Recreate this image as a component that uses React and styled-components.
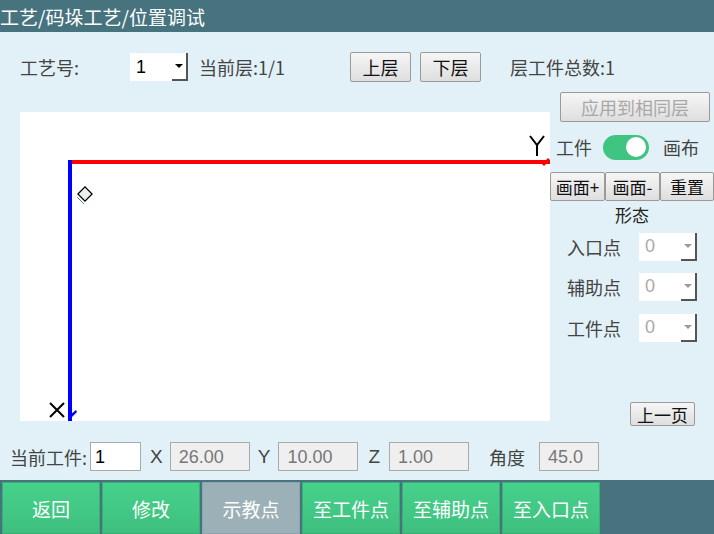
import React, { useState } from "react";
import styled, { createGlobalStyle } from "styled-components";

const GlobalStyle = createGlobalStyle`
  html, body {
    margin: 0;
    padding: 0;
    width: 714px;
    height: 534px;
    overflow: hidden;
    font-family: "Noto Sans CJK SC", "Noto Sans", sans-serif;
  }
  * { box-sizing: border-box; }
`;

const Page = styled.div`
  width: 714px;
  height: 534px;
  display: flex;
  flex-direction: column;
  background: #e2f1f7;
  color: #444;
`;

const TitleBar = styled.div`
  height: 32px;
  flex-shrink: 0;
  background: #47737f;
  color: #fff;
  font-size: 19px;
  line-height: 34px;
  white-space: nowrap;
`;

const TopRow = styled.div`
  height: 50px;
  flex-shrink: 0;
  padding: 20px 0 0 20px;
  display: flex;
  align-items: center;
  font-size: 18px;
`;

const Label = styled.span`
  font-size: 18px;
  color: #444;
  white-space: nowrap;
  margin-left: ${(p) => p.$ml || 0}px;
`;

const Combo = styled.div`
  width: 58px;
  height: 28px;
  flex-shrink: 0;
  background: #fff;
  display: flex;
  align-items: center;
  margin-left: ${(p) => p.$ml || 0}px;
  font-family: "Liberation Sans", sans-serif;
  font-size: 18px;
  color: ${(p) => (p.$muted ? "#aaa" : "#000")};
  padding-left: 6px;
`;

const ComboArrow = styled.span`
  margin-left: auto;
  width: 16px;
  height: 100%;
  border-right: 2px solid #555;
  border-bottom: 2px solid #555;
  display: flex;
  align-items: center;
  justify-content: center;
  &::after {
    content: "";
    border-left: 4px solid transparent;
    border-right: 4px solid transparent;
    border-top: 4px solid ${(p) => (p.$muted ? "#999" : "#000")};
  }
`;

const Button = styled.button`
  flex-shrink: 0;
  height: ${(p) => p.$h || 30}px;
  width: ${(p) => p.$w}px;
  margin-left: ${(p) => p.$ml || 0}px;
  padding: 0;
  border: 1px solid #9a9a9a;
  border-radius: 2px;
  background: linear-gradient(#f6f6f6, #dedede);
  font-family: "Noto Sans CJK SC", sans-serif;
  font-size: ${(p) => p.$fs || 18}px;
  line-height: 1;
  color: ${(p) => (p.disabled ? "#a8a8a8" : "#111")};
  white-space: nowrap;
`;

const Middle = styled.div`
  display: flex;
  height: 350px;
  flex-shrink: 0;
`;

const CanvasCol = styled.div`
  padding: 30px 0 0 20px;
`;

const Canvas = styled.div`
  width: 530px;
  height: 309px;
  background: #fff;
`;

const Side = styled.div`
  width: 164px;
  padding-top: 10px;
  display: flex;
  flex-direction: column;
  & > * { flex-shrink: 0; }
`;

const ToggleRow = styled.div`
  display: flex;
  align-items: center;
  height: 28px;
  margin-top: 11px;
  padding-left: 6px;
`;

const Switch = styled.div`
  width: 46px;
  height: 25px;
  border-radius: 13px;
  background: #3fc482;
  margin-left: 11px;
  margin-right: 14px;
  position: relative;
  &::after {
    content: "";
    position: absolute;
    top: 2.5px;
    left: ${(p) => (p.$on ? 23 : 3)}px;
    width: 20px;
    height: 20px;
    border-radius: 50%;
    background: #fff;
  }
`;

const ViewButtons = styled.div`
  display: flex;
  margin-top: 11px;
`;

const SectionTitle = styled.div`
  text-align: center;
  font-size: 17px;
  color: #222;
  height: 27px;
  line-height: 27px;
`;

const PointRow = styled.div`
  display: flex;
  align-items: center;
  height: 27px;
  margin-top: ${(p) => p.$mt}px;
  padding-left: 17px;
`;

const PageButton = styled(Button)`
  align-self: flex-start;
  margin: 61px 0 0 80px;
  height: 24px;
  width: 65px;
  font-size: 17px;
`;

const FieldRow = styled.div`
  display: flex;
  flex-shrink: 0;
  align-items: center;
  height: 29px;
  margin-top: 10px;
  padding-left: 10px;
`;

const Field = styled.div`
  height: 29px;
  flex-shrink: 0;
  width: ${(p) => p.$w}px;
  margin-left: ${(p) => p.$ml || 0}px;
  border: 1px solid #aaa;
  background: ${(p) => (p.$edit ? "#fff" : "#efefef")};
  color: ${(p) => (p.$edit ? "#000" : "#777")};
  font-family: "Liberation Sans", sans-serif;
  font-size: 18px;
  line-height: 29px;
  padding-left: ${(p) => (p.$edit ? 4 : 8)}px;
`;

const AxisLabel = styled.span`
  font-family: "Liberation Sans", sans-serif;
  font-size: 19px;
  color: #444;
  margin-left: ${(p) => p.$ml}px;
`;

const BottomBar = styled.div`
  margin-top: 9px;
  flex: 1;
  background: #47737f;
  display: flex;
  gap: 2px;
  padding: 2px 0 0 2px;
`;

const NavButton = styled.button`
  width: 98px;
  height: 52px;
  padding: 0;
  border: 1px solid ${(p) => (p.$active ? "#8fa6ae" : "#3bb074")};
  background: ${(p) =>
    p.$active ? "#9cb0b8" : "linear-gradient(#46d28b, #3fbf7f)"};
  color: #fff;
  font-family: "Noto Sans CJK SC", sans-serif;
  font-size: 19px;
`;

function ComboBox({ value, muted, ml }) {
  return (
    <Combo $muted={muted} $ml={ml}>
      {value}
      <ComboArrow $muted={muted} />
    </Combo>
  );
}

function Drawing() {
  return (
    <svg width="530" height="309" viewBox="0 0 530 309">
      <rect x="48" y="48" width="482" height="4" fill="#ff0000" />
      <path d="M522 52 L528 46 L530 48 L524 54 Z" fill="#ff0000" />
      <rect x="48" y="48" width="4" height="261" fill="#0000ff" />
      <path d="M50 303 L56 298 L57 300 L51 306 Z" fill="#0000ff" />
      <path d="M510 24 L517 33 L524 24 M517 33 L517 44" stroke="#000" strokeWidth="2" fill="none" />
      <path d="M30 291 L44 305 M44 291 L30 305" stroke="#000" strokeWidth="2" fill="none" />
      <g transform="translate(65 82) rotate(-45)">
        <rect x="-5" y="-5" width="10" height="10" fill="#eee" stroke="#000" strokeWidth="1.3" />
      </g>
      <path d="M57 85 L63 91" stroke="#e08a2a" strokeWidth="1" />
      <path d="M58 86 L64 92" stroke="#3a8ad8" strokeWidth="1" />
    </svg>
  );
}

export default function App() {
  const [on] = useState(true);
  return (
    <>
      <GlobalStyle />
      <Page>
        <TitleBar>工艺/码垛工艺/位置调试</TitleBar>
        <TopRow>
          <Label>工艺号:</Label>
          <ComboBox value="1" ml={51} />
          <Label $ml={11}>当前层:1/1</Label>
          <Button $w={61} $ml={65}>上层</Button>
          <Button $w={61} $ml={9}>下层</Button>
          <Label $ml={29}>层工件总数:1</Label>
        </TopRow>
        <Middle>
          <CanvasCol>
            <Canvas>
              <Drawing />
            </Canvas>
          </CanvasCol>
          <Side>
            <Button $w={150} $ml={10} disabled>应用到相同层</Button>
            <ToggleRow>
              <Label>工件</Label>
              <Switch $on={on} />
              <Label>画布</Label>
            </ToggleRow>
            <ViewButtons>
              <Button $w={55} $h={29} $fs={17}>画面+</Button>
              <Button $w={55} $h={29} $fs={17}>画面-</Button>
              <Button $w={54} $h={29} $fs={17}>重置</Button>
            </ViewButtons>
            <SectionTitle>形态</SectionTitle>
            <PointRow $mt={5}>
              <Label>入口点</Label>
              <ComboBox value="0" muted ml={18} />
            </PointRow>
            <PointRow $mt={13}>
              <Label>辅助点</Label>
              <ComboBox value="0" muted ml={18} />
            </PointRow>
            <PointRow $mt={14}>
              <Label>工件点</Label>
              <ComboBox value="0" muted ml={18} />
            </PointRow>
            <PageButton>上一页</PageButton>
          </Side>
        </Middle>
        <FieldRow>
          <Label>当前工件:</Label>
          <Field $edit $w={51} $ml={3}>1</Field>
          <AxisLabel $ml={9}>X</AxisLabel>
          <Field $w={80} $ml={7}>26.00</Field>
          <AxisLabel $ml={8}>Y</AxisLabel>
          <Field $w={80} $ml={8}>10.00</Field>
          <AxisLabel $ml={10}>Z</AxisLabel>
          <Field $w={80} $ml={9}>1.00</Field>
          <Label $ml={20}>角度</Label>
          <Field $w={60} $ml={14}>45.0</Field>
        </FieldRow>
        <BottomBar>
          <NavButton>返回</NavButton>
          <NavButton>修改</NavButton>
          <NavButton $active>示教点</NavButton>
          <NavButton>至工件点</NavButton>
          <NavButton>至辅助点</NavButton>
          <NavButton>至入口点</NavButton>
        </BottomBar>
      </Page>
    </>
  );
}
